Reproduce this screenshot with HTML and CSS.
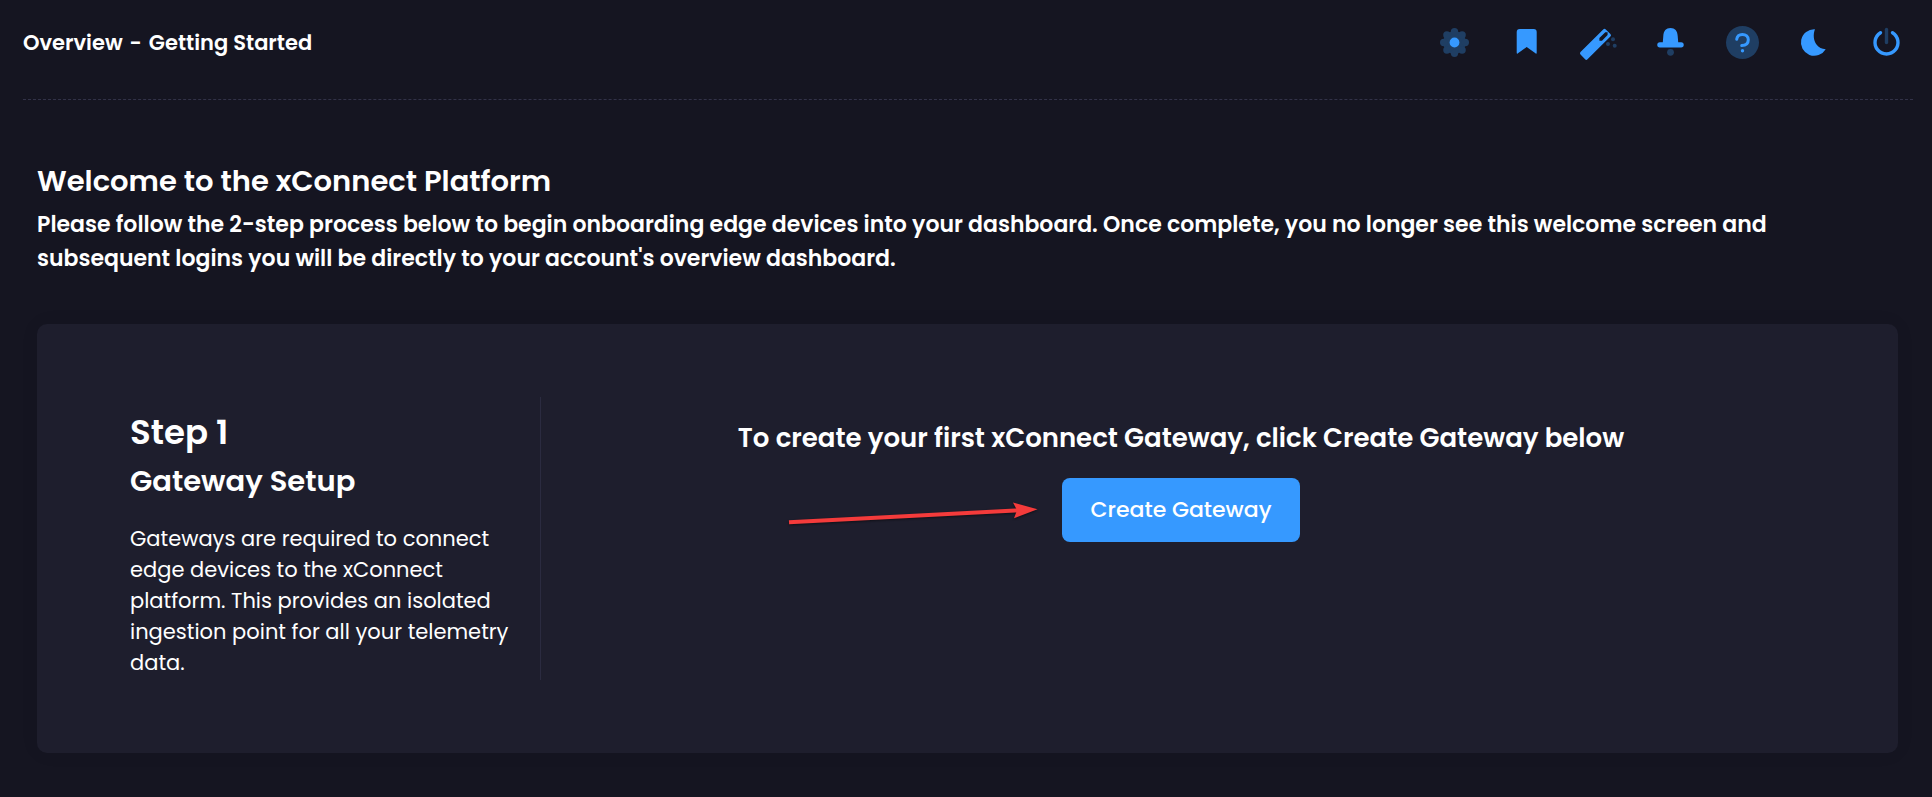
FILE: index.html
```html
<!DOCTYPE html>
<html lang="en">
<head>
<meta charset="utf-8">
<title>Overview - Getting Started</title>
<link rel="stylesheet" href="styles.css">
</head>
<body>
<header class="topbar">
  <nav class="crumbs" aria-label="Breadcrumb">
    <span>Overview</span><span>-</span><span>Getting Started</span>
  </nav>
  <div class="tools">
    <button class="tool" type="button" aria-label="Settings">
      <svg viewBox="0 0 40 40"><g class="soft"><circle cx="20.500" cy="20.500" r="11.300"/><circle cx="20.500" cy="9.700" r="3.700"/><circle cx="20.500" cy="31.300" r="3.700"/><circle cx="9.700" cy="20.500" r="3.700"/><circle cx="31.300" cy="20.500" r="3.700"/><circle cx="12.900" cy="12.900" r="3.700"/><circle cx="28.100" cy="12.900" r="3.700"/><circle cx="12.900" cy="28.100" r="3.700"/><circle cx="28.100" cy="28.100" r="3.700"/></g><circle class="solid" cx="20.500" cy="20.500" r="4.900"/></svg>
    </button>
    <button class="tool" type="button" aria-label="Bookmarks">
      <svg viewBox="0 0 40 40"><path class="solid" d="M13.700 7h14a3 3 0 0 1 3 3v20.500q0 2-1.600.6L20.700 25l-8.400 6.100q-1.600 1.400-1.600-.6V10a3 3 0 0 1 3-3z"/></svg>
    </button>
    <button class="tool" type="button" aria-label="Setup wizard">
      <svg viewBox="0 0 40 40"><path class="solid" fill-rule="evenodd" d="M2.500 30.100 25.200 7.400q1.300-1.300 2.600 0l4.600 4.600q1.300 1.300 0 2.600L9.500 37.300q-1.200 1.200-2.400 0l-4.600-4.800q-1.200-1.200 0-2.400zM27.300 10.200 21.400 16.100v2.700h2.600L29.600 13v-2.800z"/><g class="soft"><circle cx="35" cy="17.300" r="2"/><circle cx="30" cy="22" r="2"/><circle cx="36.700" cy="23.700" r="2"/></g></svg>
    </button>
    <button class="tool" type="button" aria-label="Notifications">
      <svg viewBox="0 0 40 40"><path class="solid" d="M13.300 14C13.600 8.800 16 6 20.500 6s6.900 2.800 7.200 8l.5 6.200h2.900a2.650 2.650 0 0 1 0 5.300H9.900a2.650 2.650 0 0 1 0-5.300h2.900z"/><circle class="soft" cx="20.500" cy="30.300" r="3.400"/></svg>
    </button>
    <button class="tool" type="button" aria-label="Help">
      <svg viewBox="0 0 40 40"><circle class="soft" cx="20.500" cy="20.500" r="16.500"/><path class="line" d="M14.700 17.200c.4-3 2.700-4.800 5.700-4.800 3.500 0 5.900 2.200 5.900 5.300 0 3.600-2.600 5.700-6.600 5.900"/><circle class="solid" cx="20.500" cy="28.700" r="1.700"/></svg>
    </button>
    <button class="tool" type="button" aria-label="Dark mode">
      <svg viewBox="0 0 40 40"><path class="solid" d="M20.900 7.200c-2 5.800-1.300 11.300 1.600 15.200 2.200 2.900 5.400 4.600 9.200 4.800A13.300 13.300 0 1 1 20.900 7.200z"/></svg>
    </button>
    <button class="tool" type="button" aria-label="Sign out">
      <svg viewBox="0 0 40 40"><path class="ring" stroke-width="3.400" d="M14.500 10.700a11.500 11.500 0 1 0 12 0"/><path class="stem" stroke-width="3.400" d="M20.500 7.400v13.200"/></svg>
    </button>
  </div>
</header>
<main class="page">
  <section class="intro">
    <h1 class="title">Welcome to the xConnect Platform</h1>
    <p class="lead">Please follow the 2-step process below to begin onboarding edge devices into your dashboard. Once complete, you no longer see this welcome screen and subsequent logins you will be directly to your account's overview dashboard.</p>
  </section>
  <section class="card">
    <div class="step">
      <h2 class="step-number">Step 1</h2>
      <h3 class="step-name">Gateway Setup</h3>
      <p class="step-text">Gateways are required to connect edge devices to the xConnect platform. This provides an isolated ingestion point for all your telemetry data.</p>
    </div>
    <div class="action">
      <h3 class="prompt">To create your first xConnect Gateway, click Create Gateway below</h3>
      <div class="cta">
        <button class="create" type="button">Create Gateway</button>
        <svg class="arrow" viewBox="0 0 252 28" aria-hidden="true"><path class="arrow-line" d="M1 22.300 232 10.200"/><path class="arrow-head" d="M225 2.500 249.500 9.300 226 18.300l3-8z"/></svg>
      </div>
    </div>
  </section>
</main>
</body>
</html>
```
FILE: styles.css
```css
* { box-sizing: border-box; margin: 0; }

body {
  min-height: 100vh;
  background: #151521;
  color: #fff;
  font-family: Poppins, Inter, "Open Sans", sans-serif;
}

button { font: inherit; border: 0; cursor: pointer; }

.topbar {
  display: flex;
  align-items: center;
  justify-content: space-between;
  height: 100px;
  margin: 0 19px 0 23px;
  padding: 0 7px 16px 0;
  border-bottom: 1px dashed #323248;
}

.crumbs { display: flex; gap: 7px; padding-top: 2px; font-size: 21px; font-weight: 600; }
.tools { display: flex; gap: 32px; }
.tool { width: 40px; height: 40px; padding: 0; background: none; }
.tool svg { display: block; width: 40px; height: 40px; }

.solid { fill: #3699ff; }
.soft { fill: #1f3e63; }
.line, .ring, .stem { fill: none; stroke: #3699ff; stroke-linecap: round; }
.line { stroke-width: 3; }
.stem { stroke: #1f3e63; }

.page { padding: 61px 34px 40px 37px; }
.title { font-size: 29px; line-height: 40px; font-weight: 600; }
.lead { margin-top: 7px; font-size: 22px; line-height: 34px; font-weight: 600; }

.card {
  display: flex;
  margin-top: 48px;
  padding: 73px 77px 73px 93px;
  border-radius: 10px;
  background: #1e1e2d;
  box-shadow: 0 0 20px rgba(0, 0, 0, 0.05);
}

.step { flex: 0 0 411px; padding: 14px 24px 2px 0; border-right: 1px solid #2b2b40; }
.step-number { font-size: 34px; line-height: 42px; font-weight: 600; }
.step-name { margin-top: 7px; font-size: 29px; line-height: 42px; font-weight: 600; }
.step-text { margin-top: 21px; font-size: 21px; line-height: 31px; }

.action { flex: 1; padding-top: 23px; text-align: center; }
.prompt { font-size: 26px; line-height: 36px; font-weight: 600; }
.cta { position: relative; width: max-content; margin: 22px auto 0; }
.create {
  padding: 16px 29px;
  border-radius: 8px;
  background: #3699ff;
  color: #fff;
  font-size: 22px;
  line-height: 32px;
  font-weight: 500;
}
.arrow {
  position: absolute;
  right: 100%;
  top: 22px;
  width: 252px;
  height: 28px;
  margin-right: 22px;
  filter: drop-shadow(0 1px 1px rgba(0, 0, 0, 0.5));
}
.arrow-line { fill: none; stroke: #f43b3b; stroke-width: 4; }
.arrow-head { fill: #f43b3b; }
```
